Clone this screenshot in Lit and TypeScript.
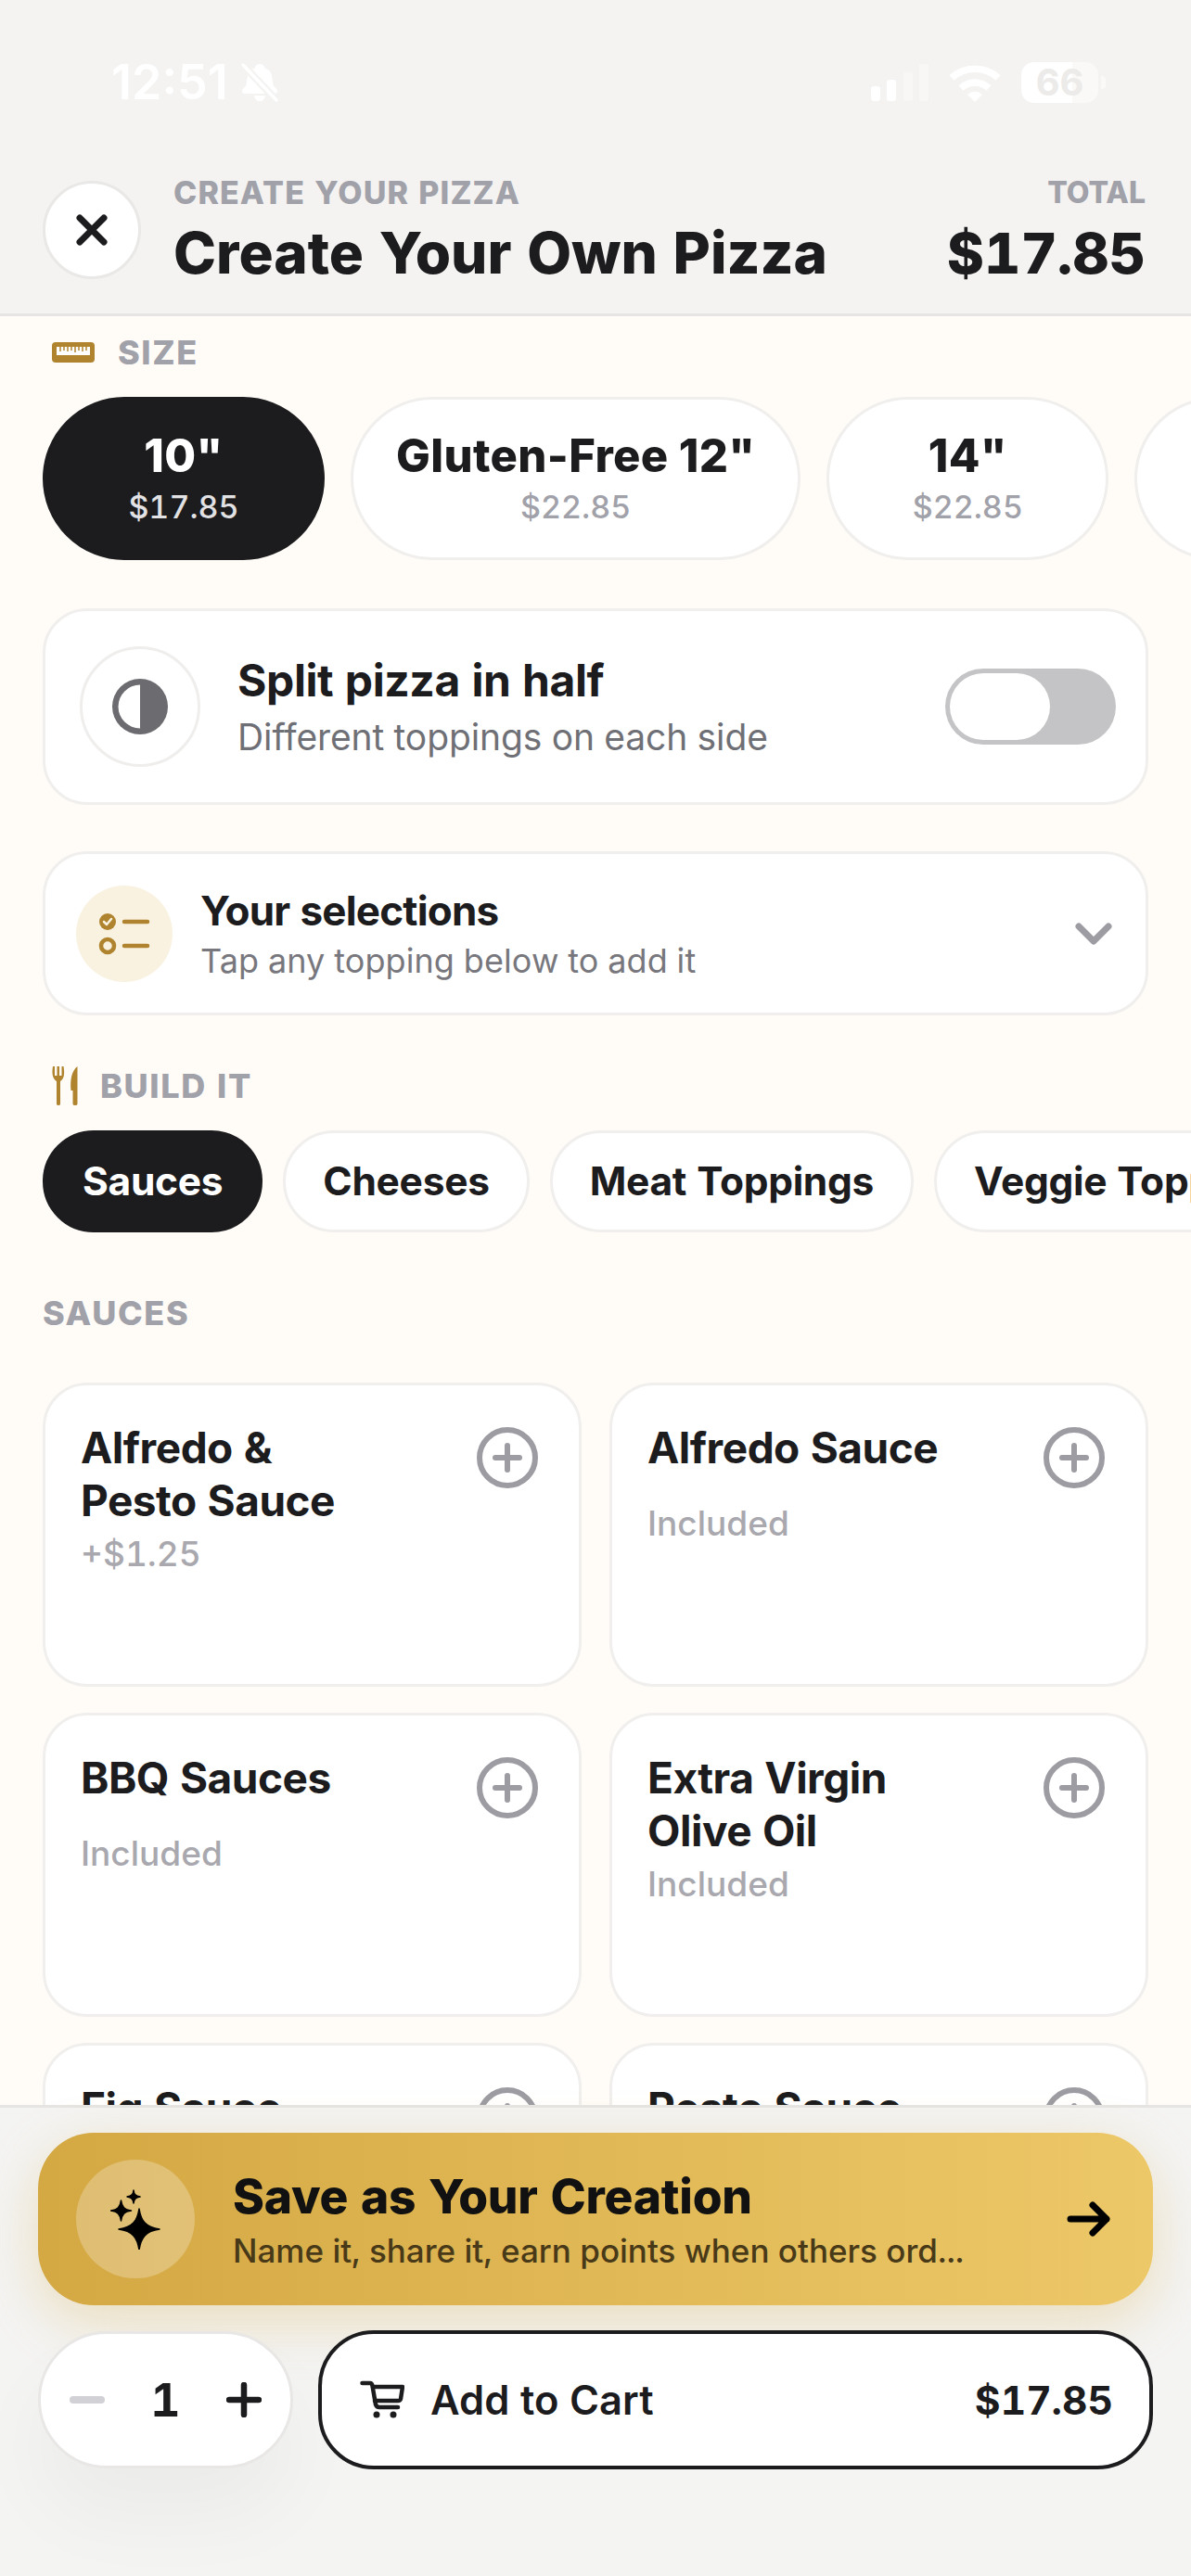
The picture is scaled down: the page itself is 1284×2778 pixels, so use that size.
import { css, html, LitElement } from 'lit';
import { customElement } from 'lit/decorators.js';

const SIZES = [
    { name: '10"', price: '$17.85', active: true },
    { name: 'Gluten-Free 12"', price: '$22.85' },
    { name: '14"', price: '$22.85' },
    { name: '', price: '' },
];
const TABS = ['Sauces', 'Cheeses', 'Meat Toppings', 'Veggie Toppings'];
const SAUCES = [
    { name: 'Alfredo & Pesto Sauce', price: '+$1.25' },
    { name: 'Alfredo Sauce', price: 'Included' },
    { name: 'BBQ Sauces', price: 'Included' },
    { name: 'Extra Virgin Olive Oil', price: 'Included' },
    { name: 'Fig Sauce', price: '' },
    { name: 'Pesto Sauce', price: '' },
];

const plusIcon = html`<svg class="plus" width="66" height="66" viewBox="0 0 66 66" fill="none" stroke="#9c9ca2" stroke-width="6" stroke-linecap="round">
  <circle cx="33" cy="33" r="30"/><path d="M33 20V46M20 33H46"/></svg>`;

@customElement('app-root')
export class AppRoot extends LitElement {

    static get styles() {
        return css`
      :host {
        display: flex;
        flex-direction: column;
        width: 1284px;
        height: 2778px;
        overflow: hidden;
        background: #fffcf8;
        color: #1c1c1e;
        font-family: Inter, "Liberation Sans", sans-serif;
        font-variant-numeric: tabular-nums;
      }
      svg { display: block; flex: none; }

      .top {
        flex: none;
        height: 338px;
        background: #f4f3f1;
        border-bottom: 3px solid #e6e5e3;
      }
      .status {
        display: flex;
        align-items: center;
        height: 178px;
        padding: 0 92px 0 120px;
        box-sizing: border-box;
        color: #fff;
      }
      .time {
        font-size: 52px;
        font-weight: 600;
        line-height: 60px;
        margin-right: 14px;
        font-variant-numeric: normal;
      }
      .status-right {
        display: flex;
        align-items: center;
        margin-left: auto;
        gap: 22px;
      }
      .battery {
        display: flex;
        align-items: center;
        justify-content: center;
        width: 83px;
        height: 44px;
        border-radius: 14px;
        background: linear-gradient(90deg, #fff 66%, #faf9f7 66%);
        color: #ecebe9;
        font-size: 40px;
        font-weight: 700;
        line-height: 44px;
      }
      .nub {
        width: 5px;
        height: 14px;
        margin-left: -19px;
        border-radius: 0 4px 4px 0;
        background: #faf9f7;
      }
      .header {
        display: flex;
        align-items: center;
        padding: 0 49px 0 46px;
        height: 140px;
      }
      .close {
        display: flex;
        align-items: center;
        justify-content: center;
        width: 106px;
        height: 106px;
        box-sizing: border-box;
        border-radius: 50%;
        background: #fff;
        border: 3px solid #e9e8e6;
        margin-right: 35px;
      }
      .header-text { flex: 1; }
      .eyebrow {
        font-size: 34px;
        font-weight: 800;
        line-height: 40px;
        letter-spacing: 1.1px;
        color: #a1a1aa;
      }
      .title {
        font-size: 62px;
        font-weight: 800;
        line-height: 72px;
        margin-top: 9px;
      }
      .total { text-align: right; }
      .total .eyebrow { font-size: 32px; letter-spacing: 0; }
      .total .title { font-size: 61px; }

      main {
        flex: 1;
        min-height: 0;
        overflow: hidden;
      }
      .section-label {
        display: flex;
        align-items: center;
        height: 44px;
        padding-left: 56px;
        font-size: 36px;
        font-weight: 800;
        letter-spacing: 1.6px;
        color: #a1a1aa;
      }
      .size-label { margin-top: 17px; gap: 25px; }
      .build-label { margin-top: 54px; gap: 24px; }
      .sauces-label { margin-top: 65px; padding-left: 46px; }

      .scroller {
        display: flex;
        padding-left: 46px;
        overflow: hidden;
      }
      .sizes { margin-top: 26px; gap: 28px; }
      .tabs { margin-top: 26px; gap: 22px; }

      .pill {
        flex: none;
        box-sizing: border-box;
        background: #fff;
        border: 3px solid #f0efed;
        text-align: center;
      }
      .pill.active {
        background: #1c1c1e;
        border-color: #1c1c1e;
        color: #fff;
      }
      .size {
        display: flex;
        flex-direction: column;
        justify-content: center;
        min-width: 304px;
        height: 176px;
        padding: 0 46px;
        border-radius: 88px;
      }
      .size-name {
        font-size: 49px;
        font-weight: 800;
        letter-spacing: 0.35px;
        line-height: 56px;
        font-variant-numeric: normal;
      }
      .size-price {
        font-size: 34px;
        font-weight: 500;
        line-height: 44px;
        margin-top: 5px;
        color: #a1a1aa;
      }
      .active .size-price { color: #e2e2e5; }
      .tab {
        height: 110px;
        padding: 0 40px;
        border-radius: 55px;
        font-size: 42.5px;
        font-weight: 700;
        letter-spacing: -0.3px;
        line-height: 104px;
      }

      .card {
        display: flex;
        align-items: center;
        box-sizing: border-box;
        margin: 0 46px;
        background: #fff;
        border: 3px solid #f0efed;
        border-radius: 48px;
      }
      .split {
        margin-top: 52px;
        height: 212px;
        padding: 0 32px 0 37px;
      }
      .split-icon {
        display: flex;
        align-items: center;
        justify-content: center;
        width: 130px;
        height: 130px;
        box-sizing: border-box;
        border-radius: 50%;
        border: 3px solid #efeeec;
        margin-right: 40px;
      }
      .card-text { flex: 1; }
      .split-title {
        font-size: 48px;
        font-weight: 700;
        letter-spacing: -0.4px;
        line-height: 62px;
      }
      .split-sub {
        font-size: 39px;
        letter-spacing: -0.1px;
        line-height: 52px;
        color: #6f6f76;
        margin-top: 4px;
      }
      .toggle {
        display: flex;
        width: 184px;
        height: 82px;
        box-sizing: border-box;
        padding: 5px;
        border-radius: 41px;
        background: #c4c4c6;
      }
      .knob {
        width: 108px;
        border-radius: 36px;
        background: #fff;
      }
      .selections {
        margin-top: 50px;
        height: 177px;
        padding: 0 36px 0 33px;
      }
      .sel-icon {
        display: flex;
        align-items: center;
        justify-content: center;
        width: 104px;
        height: 104px;
        border-radius: 50%;
        background: #f9f2e0;
        margin-right: 30px;
      }
      .sel-title {
        font-size: 44px;
        font-weight: 700;
        letter-spacing: -0.8px;
        line-height: 56px;
      }
      .sel-sub {
        font-size: 36px;
        letter-spacing: 0.1px;
        line-height: 46px;
        color: #77777d;
        margin-top: 3px;
      }

      .grid {
        display: grid;
        grid-template-columns: 1fr 1fr;
        gap: 28px 30px;
        margin: 53px 46px 0;
      }
      .item {
        box-sizing: border-box;
        height: 328px;
        padding: 39px 38px;
        background: #fff;
        border: 3px solid #f0efed;
        border-radius: 48px;
      }
      .item-row {
        display: flex;
        justify-content: space-between;
        min-height: 81px;
      }
      .item-name {
        max-width: 340px;
        font-size: 46px;
        font-weight: 700;
        letter-spacing: -0.5px;
        line-height: 57px;
      }
      .plus { margin: 6px 6px 0 0; }
      .item-price {
        font-size: 37px;
        font-weight: 500;
        line-height: 44px;
        color: #a8a8ae;
        margin-top: 7px;
      }

      footer {
        flex: none;
        box-sizing: border-box;
        height: 508px;
        padding: 27px 41px 0;
        background: #f4f4f3;
        border-top: 3px solid #e6e5e3;
      }
      .save {
        display: flex;
        align-items: center;
        height: 186px;
        padding: 0 46px 0 41px;
        box-sizing: border-box;
        border-radius: 60px;
        background: linear-gradient(90deg, #d4a843, #edc868);
        box-shadow: 0 18px 60px rgba(212, 168, 67, 0.3);
      }
      .save-icon {
        display: flex;
        align-items: center;
        justify-content: center;
        width: 128px;
        height: 128px;
        border-radius: 50%;
        background: rgba(255, 255, 255, 0.25);
        margin-right: 41px;
      }
      .save-text { flex: 1; }
      .save-title {
        font-size: 51.5px;
        font-weight: 800;
        letter-spacing: -0.2px;
        line-height: 64px;
        color: #111;
      }
      .save-sub {
        font-size: 35px;
        font-weight: 500;
        line-height: 46px;
        color: #483a18;
        margin-top: 4px;
      }
      .actions {
        display: flex;
        gap: 27px;
        align-items: center;
        margin-top: 27px;
      }
      .qty {
        display: flex;
        align-items: center;
        justify-content: space-between;
        box-sizing: border-box;
        width: 275px;
        height: 148px;
        padding: 0 31px;
        border-radius: 74px;
        background: #fff;
        border: 3px solid #e8e7e5;
        box-shadow: 0 50px 90px rgba(0, 0, 0, 0.04);
        font-size: 50px;
        font-weight: 700;
      }
      .cart {
        flex: 1;
        display: flex;
        align-items: center;
        box-sizing: border-box;
        height: 150px;
        padding: 0 39px 0 41px;
        border-radius: 60px;
        background: #fff;
        border: 4px solid #1c1c1e;
        font-size: 43.5px;
        font-weight: 600;
      }
      .cart span { flex: 1; margin-left: 28px; }
      .cart b { font-size: 42.5px; font-weight: 700; }
      `;
    }

    renderStatus() {
        return html`
      <div class="status">
        <div class="time">12:51</div>
        <svg width="40" height="42" viewBox="0 0 40 42" fill="#fff">
          <path d="M20 1C23 1 25 3 25.500 5.500C31 7 33 11 33.500 17L34.500 23C35 26 39 27 39 30.500C39 32 38 33 36 33H4C2 33 1 32 1 30.500C1 27 5 26 5.500 23L6.500 17C7 11 9 7 14.500 5.500C15 3 17 1 20 1Z"/>
          <path d="M14 35H26C25.500 39 23 41 20 41S14.500 39 14 35Z"/>
          <path d="M2 2L38 40" stroke="#f4f3f1" stroke-width="8"/>
          <path d="M2 2L38 40" stroke="#fff" stroke-width="3.500" stroke-linecap="round"/>
        </svg>
        <div class="status-right">
          <svg width="62" height="40" viewBox="0 0 62 40">
            <rect x="0" y="24" width="10" height="16" rx="3" fill="#fff"/>
            <rect x="17" y="17" width="10" height="23" rx="3" fill="#fff"/>
            <rect x="35" y="9" width="10" height="31" rx="3" fill="#f8f7f5"/>
            <rect x="52" y="0" width="10" height="40" rx="3" fill="#f8f7f5"/>
          </svg>
          <svg width="56" height="41" viewBox="0 0 56 41" fill="none" stroke="#fff" stroke-width="7.500">
            <path d="M3 15C17 2 39 2 53 15"/>
            <path d="M13 26C22 18 34 18 43 26"/>
            <path d="M20 33C25 28.500 31 28.500 36 33L28 41Z" fill="#fff" stroke="none"/>
          </svg>
          <div class="battery">66</div>
          <div class="nub"></div>
        </div>
      </div>`;
    }

    renderHeader() {
        return html`
      <div class="header">
        <div class="close">
          <svg width="34" height="34" viewBox="0 0 34 34" fill="none" stroke="#1c1c1e" stroke-width="7" stroke-linecap="round">
            <path d="M4 4L30 30M30 4L4 30"/>
          </svg>
        </div>
        <div class="header-text">
          <div class="eyebrow">CREATE YOUR PIZZA</div>
          <div class="title">Create Your Own Pizza</div>
        </div>
        <div class="total">
          <div class="eyebrow">TOTAL</div>
          <div class="title">$17.85</div>
        </div>
      </div>`;
    }

    renderFooter() {
        return html`
      <footer>
        <div class="save">
          <div class="save-icon">
            <svg width="54" height="65" viewBox="0 0 54 65" fill="#000" stroke="#000" stroke-width="1.500" stroke-linejoin="round">
              <path d="M31 21C33 34 38 41 53 43C38 45 33 52 31 65C29 52 24 45 9 43C24 41 29 34 31 21Z"/>
              <path d="M11.500 12C12.500 19 15 22 22.500 23C15 24 12.500 27 11.500 34C10.500 27 8 24 .5 23C8 22 10.500 19 11.500 12Z"/>
              <path d="M25 1C25.500 5.500 27 7 32 8C27 9 25.500 10.500 25 15C24.500 10.500 23 9 18 8C23 7 24.500 5.500 25 1Z"/>
            </svg>
          </div>
          <div class="save-text">
            <div class="save-title">Save as Your Creation</div>
            <div class="save-sub">Name it, share it, earn points when others ord...</div>
          </div>
          <svg width="47" height="38" viewBox="0 0 47 38" fill="none" stroke="#000" stroke-width="7" stroke-linecap="round" stroke-linejoin="round">
            <path d="M4 19H43M28 4L43 19L28 34"/>
          </svg>
        </div>
        <div class="actions">
          <div class="qty">
            <svg width="38" height="8" viewBox="0 0 38 8"><rect width="38" height="8" rx="4" fill="#d1d1d6"/></svg>
            <div>1</div>
            <svg width="38" height="38" viewBox="0 0 38 38" fill="none" stroke="#1c1c1e" stroke-width="6.500" stroke-linecap="round">
              <path d="M19 3V35M3 19H35"/>
            </svg>
          </div>
          <div class="cart">
            <svg width="48" height="42" viewBox="0 0 48 42" fill="none" stroke="#1c1c1e" stroke-width="4.500" stroke-linecap="round" stroke-linejoin="round">
              <path d="M2.500 3H11Q13 3 13.500 6L17 26Q18 29 21 29H41"/>
              <path d="M14 7H46L44 20Q43.500 22 41 22H16"/>
              <circle cx="18" cy="37" r="3.500" fill="#1c1c1e" stroke="none"/>
              <circle cx="36" cy="37" r="3.500" fill="#1c1c1e" stroke="none"/>
            </svg>
            <span>Add to Cart</span>
            <b>$17.85</b>
          </div>
        </div>
      </footer>`;
    }

    render() {
        return html`
      <div class="top">
        ${this.renderStatus()}
        ${this.renderHeader()}
      </div>
      <main>
        <div class="section-label size-label">
          <svg width="46" height="22" viewBox="0 0 46 22">
            <rect width="46" height="22" rx="4" fill="#b0842f"/>
            <rect x="5" y="5" width="36" height="9" fill="#fff"/>
            <path d="M9 5V10M13 5V9M17 5V10M21 5V9M25 5V11M29 5V9M33 5V10M37 5V9" stroke="#b0842f" stroke-width="1.500"/>
          </svg>
          SIZE
        </div>
        <div class="scroller sizes">
          ${SIZES.map(s => html`
            <div class="pill size ${s.active ? 'active' : ''}">
              <div class="size-name">${s.name}</div>
              <div class="size-price">${s.price}</div>
            </div>`)}
        </div>

        <div class="card split">
          <div class="split-icon">
            <svg width="60" height="60" viewBox="0 0 60 60">
              <circle cx="30" cy="30" r="30" fill="#6b6b70"/>
              <path d="M30 6.500A23.500 23.500 0 0 0 30 53.500Z" fill="#fff"/>
            </svg>
          </div>
          <div class="card-text">
            <div class="split-title">Split pizza in half</div>
            <div class="split-sub">Different toppings on each side</div>
          </div>
          <div class="toggle"><div class="knob"></div></div>
        </div>

        <div class="card selections">
          <div class="sel-icon">
            <svg width="56" height="46" viewBox="0 0 56 46" fill="none" stroke="#b0842f" stroke-width="4.500" stroke-linecap="round">
              <circle cx="10" cy="10" r="9" fill="#b0842f" stroke="none"/>
              <path d="M6 10L9 13L14 7" stroke="#f9f2e0" stroke-width="2.500" stroke-linejoin="round"/>
              <circle cx="10" cy="36" r="7"/>
              <path d="M28 10H53M28 36H53"/>
            </svg>
          </div>
          <div class="card-text">
            <div class="sel-title">Your selections</div>
            <div class="sel-sub">Tap any topping below to add it</div>
          </div>
          <svg width="40" height="26" viewBox="0 0 40 26" fill="none" stroke="#9c9ca2" stroke-width="7" stroke-linecap="round" stroke-linejoin="round">
            <path d="M4 5L20 21L36 5"/>
          </svg>
        </div>

        <div class="section-label build-label">
          <svg width="28" height="42" viewBox="0 0 28 42" fill="#b0842f">
            <path d="M1 0H3V10H5.500V0H8V10H10.500V0H12.500C13.500 6 14 13 9 16V40.500Q9 42 7 42Q5 42 5 40.500V16C0 13 0 6 1 0Z"/>
            <path d="M27.500 0V40.500Q27.500 42 25 42Q22.500 42 22.500 40.500V26H20.500C19.500 15 21 5 27.500 0Z"/>
          </svg>
          BUILD IT
        </div>
        <div class="scroller tabs">
          ${TABS.map((t, i) => html`<div class="pill tab ${i === 0 ? 'active' : ''}">${t}</div>`)}
        </div>

        <div class="section-label sauces-label">SAUCES</div>
        <div class="grid">
          ${SAUCES.map(s => html`
            <div class="item">
              <div class="item-row">
                <div class="item-name">${s.name}</div>
                ${plusIcon}
              </div>
              <div class="item-price">${s.price}</div>
            </div>`)}
        </div>
      </main>
      ${this.renderFooter()}
    `;
    }
}
